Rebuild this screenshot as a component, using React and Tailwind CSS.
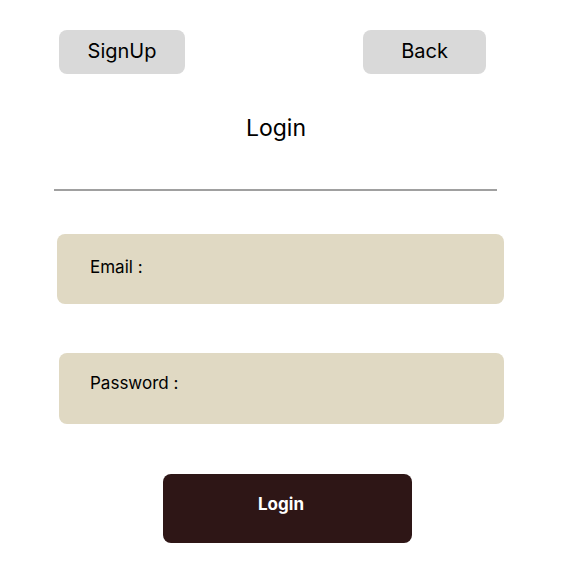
import React from 'react';

function App() {
    return (
        <div className="w-[571px] h-[578px] bg-white font-['Inter',sans-serif] text-black">
            <div className="flex pt-[30px] pl-[59px]">
                <button className="w-[126px] h-[44px] rounded-[8px] bg-[#d9d9d9] text-[20px] leading-[24px] pb-[3px]">
                    SignUp
                </button>
                <button className="ml-[178px] w-[123px] h-[44px] rounded-[8px] bg-[#d9d9d9] text-[20px] leading-[24px] pb-[3px]">
                    Back
                </button>
            </div>

            <h1 className="mt-[34px] w-[552px] h-[40px] flex items-center justify-center text-[23px]">
                Login
            </h1>

            <div className="mt-[41px] ml-[54px] w-[443px] h-[2px] bg-[#a0a0a0]"></div>

            <div className="mt-[43px] ml-[57px] w-[447px] h-[70px] rounded-[8px] bg-[#e0d9c3] pl-[33px] pt-[21px] text-[17px] leading-[24px]">
                Email :
            </div>

            <div className="mt-[49px] ml-[59px] w-[445px] h-[71px] rounded-[8px] bg-[#e0d9c3] pl-[31px] pt-[18px] text-[17px] leading-[24px]">
                Password :
            </div>

            <button className="mt-[50px] ml-[163px] w-[249px] h-[69px] rounded-[8px] bg-[#2e1616] text-white font-bold text-[17px] pr-[13px] pb-[7px] block">
                Login
            </button>
        </div>
    );
}

export default App;
